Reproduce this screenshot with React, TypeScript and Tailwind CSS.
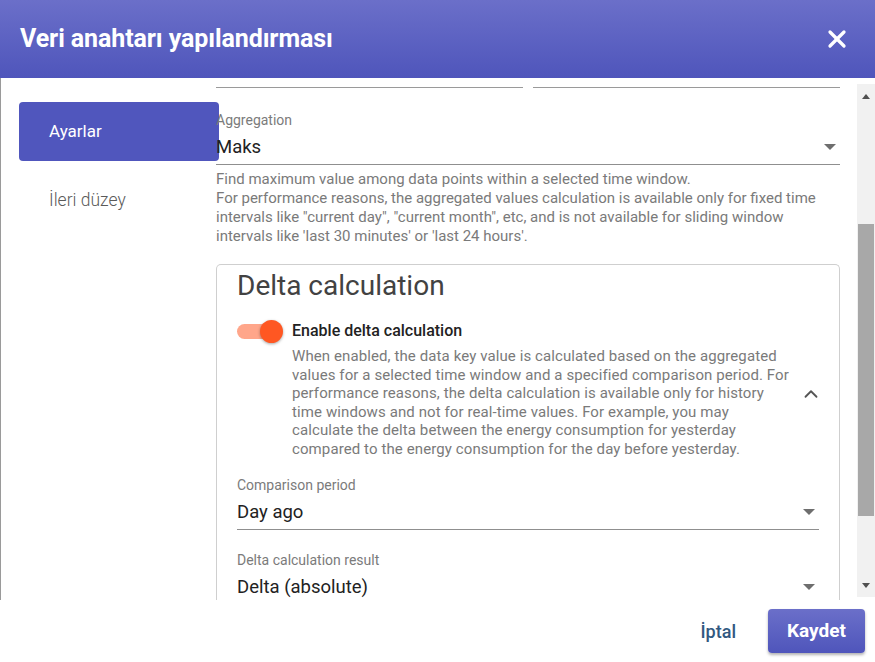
import { X, ChevronUp } from 'lucide-react'

const FONT = { fontFamily: 'Roboto, "Noto Sans", Arial, sans-serif' }

function Caret() {
  return (
    <svg width="12" height="6" viewBox="0 0 12 6" className="shrink-0">
      <path d="M0 0 L12 0 L6 6 Z" fill="#6e6e6e" />
    </svg>
  )
}

function SelectField({ label, value, className = '' }: { label: string; value: string; className?: string }) {
  return (
    <div className={className}>
      <div className="text-[14px] leading-[16px] text-[#7b7b7b]">{label}</div>
      <div className="flex items-center justify-between border-b border-[#8f8f8f] pb-[5px] pt-[7px]">
        <span className="text-[18.5px] leading-[24px] text-[#222]">{value}</span>
        <span className="pr-[4px]">
          <Caret />
        </span>
      </div>
    </div>
  )
}

function Scrollbar() {
  return (
    <div className="flex w-[18px] flex-col bg-[#f1f1f1] py-[4px]">
      <div className="flex h-[16px] items-center justify-center">
        <svg width="8" height="5" viewBox="0 0 8 5">
          <path d="M0 5 L8 5 L4 0 Z" fill="#505050" />
        </svg>
      </div>
      <div className="flex flex-1 flex-col px-[1px]">
        <div className="h-[120px]" />
        <div className="h-[292px] bg-[#a8a8a8]" />
        <div className="flex-1" />
      </div>
      <div className="flex h-[16px] items-center justify-center">
        <svg width="8" height="5" viewBox="0 0 8 5">
          <path d="M0 0 L8 0 L4 5 Z" fill="#505050" />
        </svg>
      </div>
    </div>
  )
}

export default function App() {
  return (
    <div className="flex h-[662px] w-[875px] flex-col overflow-hidden bg-white" style={FONT}>
      <header className="flex h-[78px] shrink-0 items-center justify-between bg-gradient-to-b from-[#6b6fc9] to-[#4f55bb] pl-[20px] pr-[24px]">
        <h1 className="text-[25px] font-bold tracking-[-0.1px] text-white">Veri anahtarı yapılandırması</h1>
        <X className="h-[28px] w-[28px] text-white" strokeWidth={2.8} />
      </header>

      <div className="flex min-h-0 flex-1 border-l border-[#9a9a9a]">
        <nav className="flex w-[215px] shrink-0 flex-col pl-[18px] pt-[24px]">
          <div className="flex h-[59px] w-[200px] items-center rounded-[4px] bg-[#5056bd] pl-[30px] text-[17px] text-white">
            Ayarlar
          </div>
          <div className="flex h-[78px] items-center pl-[30px] text-[17.5px] font-light text-[#5a5a5a]">İleri düzey</div>
        </nav>

        <main className="min-h-0 flex-1 overflow-hidden pr-[17px] pt-[9px]">
          <div className="flex gap-[10px]">
            <div className="h-px flex-1 bg-[#9a9a9a]" />
            <div className="h-px flex-1 bg-[#9a9a9a]" />
          </div>

          <SelectField className="mt-[24px]" label="Aggregation" value="Maks" />

          <p className="mt-[5px] text-[15px] leading-[19px] text-[#7a7a7a]">
            Find maximum value among data points within a selected time window.
            <br />
            For performance reasons, the aggregated values calculation is available only for fixed time intervals like
            "current day", "current month", etc, and is not available for sliding window intervals like 'last 30 minutes'
            or 'last 24 hours'.
          </p>

          <section className="mt-[18px] rounded-t-[5px] border border-b-0 border-[#cfcfcf] pb-[20px] pl-[20px] pr-[20px] pt-[4px]">
            <h2 className="text-[28px] leading-[34px] text-[#424242]">Delta calculation</h2>

            <div className="mt-[17px] flex items-center">
              <div className="flex flex-1 items-start">
                <div className="relative h-[22px] w-[46px] shrink-0">
                  <div className="absolute left-0 top-[4px] h-[15px] w-[36px] rounded-full bg-[#ffa68a]" />
                  <div className="absolute right-0 top-0 h-[23px] w-[23px] rounded-full bg-[#ff5722] shadow-[0_1px_3px_rgba(0,0,0,0.35)]" />
                </div>
                <div className="ml-[9px]">
                  <div className="text-[16px] font-medium leading-[22px] text-[#222]">Enable delta calculation</div>
                  <p className="mt-[5px] w-[501px] text-[15px] leading-[18.5px] tracking-[0.1px] text-[#7a7a7a]">
                    When enabled, the data key value is calculated based on the aggregated values for a selected time
                    window and a specified comparison period. For performance reasons, the delta calculation is available
                    only for history time windows and not for real-time values. For example, you may calculate the delta
                    between the energy consumption for yesterday compared to the energy consumption for the day before
                    yesterday.
                  </p>
                </div>
              </div>
              <ChevronUp className="mr-[-3px] mt-[10px] h-[22px] w-[22px] text-[#555]" strokeWidth={2} />
            </div>

            <SelectField className="mt-[19px]" label="Comparison period" value="Day ago" />
            <SelectField className="mt-[22px]" label="Delta calculation result" value="Delta (absolute)" />
          </section>
        </main>

        <div className="flex pt-[6px] pb-[3px]">
          <Scrollbar />
        </div>
      </div>

      <footer className="flex h-[62px] shrink-0 items-center justify-end gap-[32px] pr-[10px]">
        <button className="text-[18px] font-medium text-[#31587f]">İptal</button>
        <button className="h-[44px] w-[97px] rounded-[4px] bg-gradient-to-b from-[#6b6fc9] to-[#4f55bb] text-[19px] font-bold text-white shadow-[0_2px_3px_rgba(0,0,0,0.3)]">
          Kaydet
        </button>
      </footer>
    </div>
  )
}
